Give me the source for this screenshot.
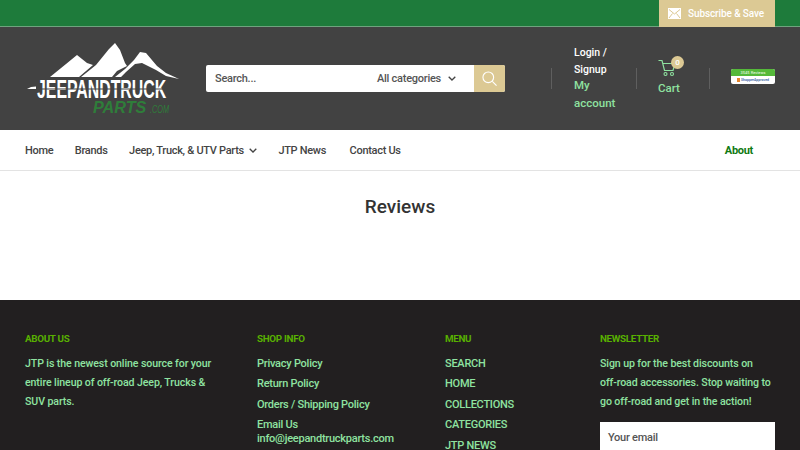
<div class="page">
  <div class="topbar">
    <div class="subscribe">
      <svg class="mail" viewBox="0 0 13 11" width="13" height="11"><rect width="13" height="11" fill="#fff"/><path d="M1 1.500 6.500 6 12 1.500M1 10l3.500-4.500M12 10 8.500 5.500" fill="none" stroke="#dcc994" stroke-width="1"/></svg>
      <span>Subscribe &amp; Save</span>
    </div>
  </div>
  <header class="header">
    <div class="logo">
      <svg viewBox="25 33 156 91" width="156" height="91">
        <path d="M50 77 66 64 77 55 87 63 93 65 79 77Z" fill="#fff"/>
        <path d="M81 77 96 65 109 49 115 43 120 50 125 63 127 66 117 71 112 77Z" fill="#fff"/>
        <path d="M115 77 125 69 134 60 140 52 146 53 157 66 166 73 179 79 166 76 156 70 142 63 135 64 126 72 121 77Z" fill="#fff"/>
        <path d="M27 89 31 87 36 86.500V89Z" fill="#fff"/>
        <text class="l-name" transform="translate(37 98) scale(.61 1)">JEEPANDTRUCK</text>
        <rect x="37" y="88.500" width="130" height="1" fill="#424242"/>
        <text class="l-parts" transform="translate(93 113) scale(.9 .95)">PARTS</text>
        <text class="l-com" transform="translate(150 113) scale(.73 1)">.COM</text>
      </svg>
    </div>
    <div class="search">
      <span class="placeholder">Search...</span>
      <span class="cats">All categories
        <svg viewBox="0 0 8 5" width="8" height="5"><path d="M.7.7 4 4 7.300.7" fill="none" stroke="#444" stroke-width="1.300"/></svg>
      </span>
      <span class="search-btn">
        <svg viewBox="0 0 16 16" width="15" height="15"><circle cx="6.700" cy="6.700" r="5.700" fill="none" stroke="#fff" stroke-width="1.200"/><path d="m11 11 4.500 4.500" stroke="#fff" stroke-width="1.200"/></svg>
      </span>
    </div>
    <div class="divider first"></div>
    <div class="account">
      <div class="login">Login /<br>Signup</div>
      <div class="my">My<br>account</div>
    </div>
    <div class="divider"></div>
    <div class="cart">
      <div class="cart-icon">
        <svg viewBox="0 0 18 18" width="18" height="18"><path d="M.5 1.500H4l2.500 10h8.500L17 4.500H5" fill="none" stroke="#8fe3a0" stroke-width="1.200"/><circle cx="7.500" cy="15" r="1.500" fill="none" stroke="#8fe3a0" stroke-width="1.100"/><circle cx="14" cy="15" r="1.500" fill="none" stroke="#8fe3a0" stroke-width="1.100"/></svg>
        <span class="count">0</span>
      </div>
      <span class="cart-label">Cart</span>
    </div>
    <div class="divider"></div>
    <div class="badge">
      <div class="badge-top">3545 Reviews</div>
      <div class="badge-bottom"><i></i><b>ShopperApproved</b></div>
    </div>
  </header>
  <nav class="nav">
    <a href="#home">Home</a>
    <a href="#brands">Brands</a>
    <a href="#parts" class="has-caret">Jeep, Truck, &amp; UTV Parts
      <svg viewBox="0 0 8 5" width="8" height="5"><path d="M.7.7 4 4 7.300.7" fill="none" stroke="#444" stroke-width="1.300"/></svg>
    </a>
    <a href="#news">JTP News</a>
    <a href="#contact" class="contact">Contact Us</a>
    <a href="#about" class="about">About</a>
  </nav>
  <main class="main"><h1>Reviews</h1></main>
  <footer class="footer">
    <section>
      <h2>ABOUT US</h2>
      <p>JTP is the newest online source for your<br>entire lineup of off-road Jeep, Trucks &amp;<br>SUV parts.</p>
    </section>
    <section>
      <h2>SHOP INFO</h2>
      <ul>
        <li>Privacy Policy</li>
        <li>Return Policy</li>
        <li>Orders / Shipping Policy</li>
        <li class="email">Email Us<br>info@jeepandtruckparts.com</li>
      </ul>
    </section>
    <section>
      <h2>MENU</h2>
      <ul>
        <li>SEARCH</li>
        <li>HOME</li>
        <li>COLLECTIONS</li>
        <li>CATEGORIES</li>
        <li>JTP NEWS</li>
      </ul>
    </section>
    <section>
      <h2>NEWSLETTER</h2>
      <p>Sign up for the best discounts on<br>off-road accessories. Stop waiting to<br>go off-road and get in the action!</p>
      <div class="email-box">Your email</div>
    </section>
  </footer>
</div>

<style>
  :global(body) { margin: 0; }
  .page {
    width: 800px; height: 450px; overflow: hidden;
    font-family: Roboto, "Liberation Sans", sans-serif;
    font-weight: 500; font-size: 11px; letter-spacing: -.25px; background: #fff; color: #444;
  }
  .topbar {
    height: 26px; background: #1e7b3b; border-bottom: 1px solid #6fa37e;
    display: flex; justify-content: flex-end; padding-right: 25px;
  }
  .subscribe {
    width: 116px; height: 27px; background: #dcc994; color: #fff; box-sizing: border-box;
    padding-left: 9px; display: flex; align-items: center; gap: 7px;
    font-size: 10px; letter-spacing: -.1px; white-space: nowrap;
  }
  .header {
    height: 103px; background: #424242; display: flex; align-items: center;
    padding-left: 25px; box-sizing: border-box;
  }
  .logo { width: 156px; height: 91px; margin-right: 25px; flex: none; }
  .logo svg { display: block; }
  .logo text { font-family: "Liberation Sans", sans-serif; letter-spacing: 0; }
  .l-name { fill: #fff; font-size: 26px; font-weight: 700; }
  .l-parts { fill: #2f7d3a; font-size: 18px; font-style: italic; font-weight: 700; }
  .l-com { fill: #2f7d3a; font-size: 10px; font-style: italic; font-weight: 400; }
  .search {
    width: 299px; height: 27px; background: #fff; border-radius: 2px; flex: none;
    display: flex; align-items: center; padding-left: 9px; box-sizing: border-box;
    color: #555;
  }
  .placeholder { flex: 1; }
  .cats { display: flex; align-items: center; gap: 7px; margin-right: 18px; }
  .search-btn {
    width: 31px; height: 27px; background: #dcc994; border-radius: 0 2px 2px 0;
    display: flex; align-items: center; justify-content: center;
  }
  .divider { width: 1px; height: 21px; background: #5f5f5f; flex: none; }
  .divider.first { margin-left: 46px; }
  .account { width: 62px; margin-left: 22px; padding-bottom: 3px; color: #fff; font-size: 10.500px; letter-spacing: 0; flex: none; }
  .login { line-height: 17px; margin-top: 1px; }
  .my { color: #8fe3a0; font-size: 11.500px; line-height: 18px; margin-top: -2px; }
  .cart { width: 72px; display: flex; flex-direction: column; align-items: flex-start; padding: 0 0 3px 21px; box-sizing: border-box; flex: none; }
  .cart-icon { position: relative; height: 18px; }
  .count {
    position: absolute; left: 13px; top: -3px; width: 13px; height: 13px; border-radius: 50%;
    background: #dcc994; color: #fff; font-size: 8px; line-height: 13px; text-align: center;
  }
  .cart-label { color: #8fe3a0; font-size: 11.500px; letter-spacing: 0; line-height: 14px; margin-top: 4px; }
  .badge { width: 44px; height: 15px; margin-left: 21px; border-radius: 2px; overflow: hidden; background: #fff; flex: none; margin-top: -5px; }
  .badge-top { height: 7px; background: #55b93a; color: #dff3d6; font-size: 4px; letter-spacing: 0; line-height: 7px; text-align: center; }
  .badge-bottom { height: 8px; display: flex; align-items: center; justify-content: center; gap: 1px; font-size: 3.500px; letter-spacing: 0; }
  .badge-bottom i { width: 3px; height: 4px; background: #e8862d; }
  .badge-bottom b { color: #2f5d9f; font-weight: 500; }
  .nav {
    height: 41px; background: #fff; border-bottom: 1px solid #e3e3e3; box-sizing: border-box;
    display: flex; align-items: center; gap: 21.500px; padding: 0 47px 0 25px; color: #444; letter-spacing: -.3px;
  }
  .nav a { color: #444; text-decoration: none; white-space: nowrap; }
  .has-caret { display: flex; align-items: center; gap: 5px; }
  .nav .contact { margin-left: 2px; }
  .nav .about { margin-left: auto; color: #0f7a12; font-weight: 700; }
  .main { height: 129px; display: flex; justify-content: center; padding-top: 24px; box-sizing: border-box; }
  h1 { margin: 0; font-size: 19px; line-height: 24px; font-weight: 500; letter-spacing: 0; color: #333; }
  .footer {
    height: 150px; background: #221f20; box-sizing: border-box; padding: 32px 25px 0;
    display: grid; grid-template-columns: 232px 188px 155px 175px; color: #8fe3a0;
  }
  h2 { margin: 0; font-size: 9.800px; line-height: 14px; font-weight: 700; letter-spacing: -.3px; color: #58b000; }
  p { margin: 9px 0 0; font-size: 10.600px; line-height: 18.800px; letter-spacing: -.1px; white-space: nowrap; }
  ul { list-style: none; margin: 11px 0 0; padding: 0; }
  li { line-height: 13.500px; margin-bottom: 6.900px; white-space: nowrap; }
  .email-box {
    width: 175px; height: 40px; background: #fff; color: #555;
    padding: 9px 8px; box-sizing: border-box; margin-top: 11px;
  }
</style>
